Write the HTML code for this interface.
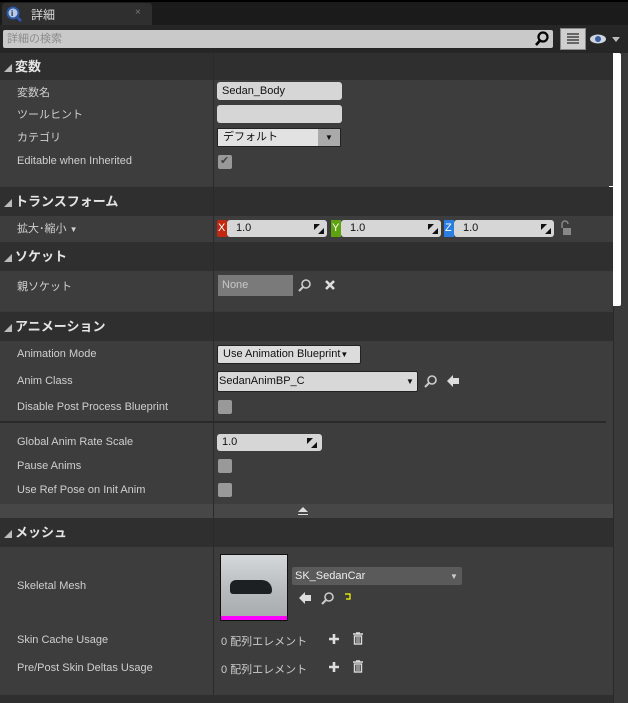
<!DOCTYPE html>
<html><head><meta charset="utf-8"><style>
*{margin:0;padding:0;box-sizing:border-box}
body{width:628px;height:703px;background:#3a3a3a;position:relative;overflow:hidden;font-family:"Liberation Sans","Noto Sans CJK JP",sans-serif;font-size:11px;color:#d0d0d0}
.a{position:absolute}
.hdr{position:absolute;left:0;width:613px;background:#2f2f2f;font-weight:bold;font-size:13px;color:#e4e4e4;padding-left:4px}
.row{position:absolute;left:0;width:613px;background:#3d3d3d}
.lbl{position:absolute;left:17px;font-size:11px;color:#cfcfcf;white-space:nowrap}
.inp{position:absolute;background:#d6d6d6;border-radius:3px;color:#111;font-size:11px;padding-left:5px}
.chk{position:absolute;width:14px;height:14px;background:#999;border-radius:2px}
.tri{font-size:8px;margin-right:3px;color:#bbb}
</style></head><body>
<div class="a" style="left:0;top:0;width:628px;height:27px;background:#1b1b1b"></div>
<div class="a" style="left:0;top:0;width:628px;height:2px;background:#000"></div>
<div class="a" style="left:2px;top:3px;width:150px;height:23px;background:#2f2f2f;border-radius:3px 3px 0 0"></div>
<svg class="a" style="left:6px;top:6px" width="17" height="17"><circle cx="7" cy="7" r="5.5" fill="#b8c9e8" stroke="#2a57a8" stroke-width="2"/><line x1="11" y1="11" x2="15" y2="15" stroke="#2a57a8" stroke-width="3"/><text x="5" y="10" font-size="8" font-weight="bold" fill="#123">i</text></svg>
<div class="a" style="left:31px;top:6px;font-size:12px;color:#ddd">詳細</div>
<div class="a" style="left:135px;top:7px;font-size:10px;color:#777">×</div>
<div class="a" style="left:0;top:25px;width:628px;height:28px;background:#262626"></div>
<div class="a" style="left:3px;top:30px;width:550px;height:18px;background:#c9c9c9;border-radius:2px;color:#8c8c8c;font-size:11px;line-height:18px;padding:0 4px">詳細の検索</div>
<svg class="a" style="left:533px;top:30px" width="18" height="18"><circle cx="10" cy="7" r="4.5" fill="none" stroke="#000" stroke-width="2.2"/><line x1="7" y1="10.5" x2="3" y2="15" stroke="#000" stroke-width="2.6"/></svg>
<div class="a" style="left:560px;top:28px;width:26px;height:22px;background:#cfcfcf;border:1px solid #888"></div>
<svg class="a" style="left:566px;top:32px" width="14" height="14"><g fill="#666"><rect x="1" y="1" width="12" height="2"/><rect x="1" y="4" width="12" height="2"/><rect x="1" y="7" width="12" height="2"/><rect x="1" y="10" width="12" height="2"/></g></svg>
<svg class="a" style="left:589px;top:32px" width="34" height="14"><ellipse cx="9" cy="7" rx="8" ry="4.5" fill="#cfd6e2"/><circle cx="9" cy="7" r="3" fill="#3a5f9e"/><path d="M23 5 L31 5 L27 10Z" fill="#bbb"/></svg>
<div class="a" style="left:609px;top:53px;width:12px;height:253px;background:#fff;border-radius:2px"></div>
<div class="a" style="left:613px;top:306px;width:1px;height:397px;background:#2a2a2a"></div>

<div class="hdr" style="top:53px;height:27px;line-height:27px"><span class="tri">◢</span>変数</div>
<div class="row" style="top:80px;height:106px"></div>
<div class="lbl" style="top:84px">変数名</div>
<div class="inp" style="left:217px;top:82px;width:125px;height:18px;line-height:18px">Sedan_Body</div>
<div class="lbl" style="top:106px">ツールヒント</div>
<div class="inp" style="left:217px;top:105px;width:125px;height:18px"></div>
<div class="lbl" style="top:129px">カテゴリ</div>
<div class="inp" style="left:217px;top:128px;width:124px;height:19px;line-height:17px;background:#e2e2e2;border:1px solid #222;border-radius:1px">デフォルト</div>
<div class="a" style="left:318px;top:129px;width:22px;height:17px;background:#aaa"></div>
<div class="a" style="left:325px;top:133px;font-size:8px;color:#111">▼</div>
<div class="lbl" style="top:155px">Editable when Inherited</div>
<div class="chk" style="left:218px;top:155px"></div>
<div class="a" style="left:220px;top:154px;font-size:11px;color:#444">✔</div>

<div class="hdr" style="top:187px;height:29px;line-height:29px"><span class="tri">◢</span>トランスフォーム</div>
<div class="row" style="top:216px;height:26px"></div>
<div class="lbl" style="top:220px">拡大･縮小 <span style="font-size:8px">▼</span></div>
<div class="a" style="left:217px;top:220px;width:10px;height:17px;background:#c1280f;border-radius:2px 0 0 2px;color:#fff;font-size:11px;padding-left:1px;line-height:17px">X</div>
<div class="inp" style="left:227px;top:220px;width:100px;height:17px;line-height:17px;padding-left:9px">1.0</div>
<div class="a" style="left:331px;top:220px;width:10px;height:17px;background:#5ea30f;color:#fff;line-height:17px;padding-left:1px">Y</div>
<div class="inp" style="left:341px;top:220px;width:100px;height:17px;line-height:17px;padding-left:9px">1.0</div>
<div class="a" style="left:444px;top:220px;width:10px;height:17px;background:#2a7de2;color:#fff;line-height:17px;padding-left:1px">Z</div>
<div class="inp" style="left:454px;top:220px;width:100px;height:17px;line-height:17px;padding-left:9px">1.0</div>
<svg class="a" style="left:314px;top:224px" width="10" height="10"><path d="M0 0H6L0 6ZM10 10H4L10 4Z" fill="#111"/></svg>
<svg class="a" style="left:428px;top:224px" width="10" height="10"><path d="M0 0H6L0 6ZM10 10H4L10 4Z" fill="#111"/></svg>
<svg class="a" style="left:541px;top:224px" width="10" height="10"><path d="M0 0H6L0 6ZM10 10H4L10 4Z" fill="#111"/></svg>
<svg class="a" style="left:560px;top:220px" width="12" height="16"><path d="M2 8V4a3 3 0 0 1 6 0" fill="none" stroke="#888" stroke-width="1.5"/><rect x="3" y="8" width="8" height="7" fill="#888"/></svg>

<div class="hdr" style="top:242px;height:29px;line-height:29px"><span class="tri">◢</span>ソケット</div>
<div class="row" style="top:271px;height:40px"></div>
<div class="lbl" style="top:278px">親ソケット</div>
<div class="a" style="left:218px;top:275px;width:75px;height:21px;background:#7a7a7a;color:#c8c8c8;line-height:21px;padding:0 4px">None</div>
<svg class="a" style="left:298px;top:278px" width="14" height="14"><circle cx="8" cy="6" r="4" fill="none" stroke="#ccc" stroke-width="1.6"/><line x1="5" y1="9" x2="1" y2="13" stroke="#ccc" stroke-width="2"/></svg>
<svg class="a" style="left:324px;top:279px" width="12" height="12"><path d="M2 2L10 10M10 2L2 10" stroke="#ddd" stroke-width="2.6"/></svg>

<div class="hdr" style="top:312px;height:29px;line-height:29px"><span class="tri">◢</span>アニメーション</div>
<div class="row" style="top:341px;height:163px"></div>
<div class="lbl" style="top:348px">Animation Mode</div>
<div class="a" style="left:217px;top:345px;width:144px;height:19px;background:#dcdcdc;border:1px solid #222;border-radius:2px;color:#111;line-height:17px;padding:0 5px;font-size:11px">Use Animation Blueprint<span style="font-size:8px">▼</span></div>
<div class="lbl" style="top:375px">Anim Class</div>
<div class="a" style="left:217px;top:371px;width:201px;height:21px;background:#d8d8d8;border:1px solid #222;border-radius:2px;color:#111;line-height:19px;padding:0 1px;font-size:11px">SedanAnimBP_C</div>
<div class="a" style="left:406px;top:377px;font-size:8px;color:#111">▼</div>
<svg class="a" style="left:424px;top:374px" width="14" height="14"><circle cx="8" cy="6" r="4" fill="none" stroke="#ccc" stroke-width="1.6"/><line x1="5" y1="9" x2="1" y2="13" stroke="#ccc" stroke-width="2"/></svg>
<svg class="a" style="left:446px;top:374px" width="14" height="14"><path d="M1 7L7 1V4H13V10H7V13Z" fill="#ddd"/></svg>
<div class="lbl" style="top:401px">Disable Post Process Blueprint</div>
<div class="chk" style="left:218px;top:400px"></div>
<div class="a" style="left:0;top:421px;width:606px;height:2px;background:#2a2a2a"></div>
<div class="lbl" style="top:436px">Global Anim Rate Scale</div>
<div class="inp" style="left:217px;top:434px;width:105px;height:17px;line-height:17px">1.0</div>
<svg class="a" style="left:307px;top:438px" width="10" height="10"><path d="M0 0H6L0 6ZM10 10H4L10 4Z" fill="#111"/></svg>
<div class="lbl" style="top:460px">Pause Anims</div>
<div class="chk" style="left:218px;top:459px"></div>
<div class="lbl" style="top:484px">Use Ref Pose on Init Anim</div>
<div class="chk" style="left:218px;top:483px"></div>
<div class="a" style="left:0;top:504px;width:613px;height:14px;background:#474747"></div>
<svg class="a" style="left:297px;top:506px" width="12" height="10"><path d="M1 6L6 1L11 6Z M1 8H11V9H1Z" fill="#ddd"/></svg>

<div class="hdr" style="top:518px;height:29px;line-height:29px"><span class="tri">◢</span>メッシュ</div>
<div class="row" style="top:547px;height:148px"></div>
<div class="a" style="left:213px;top:53px;width:1px;height:650px;background:#2a2a2a"></div>
<div class="lbl" style="top:580px">Skeletal Mesh</div>
<div class="a" style="left:220px;top:554px;width:68px;height:67px;background:#111"></div>
<div class="a" style="left:221px;top:555px;width:66px;height:61px;background:linear-gradient(#d5d8db,#b6babd 60%,#a8acaf)"></div>
<div class="a" style="left:230px;top:580px;width:42px;height:14px;background:#1d2023;border-radius:6px 10px 3px 3px"></div>
<div class="a" style="left:221px;top:616px;width:66px;height:4px;background:#ff00ff"></div>
<div class="a" style="left:292px;top:567px;width:170px;height:18px;background:#5a5a5a;border-radius:2px;color:#eee;line-height:18px;padding:0 3px;font-size:11px">SK_SedanCar</div>
<div class="a" style="left:450px;top:572px;font-size:8px;color:#ccc">▼</div>
<svg class="a" style="left:298px;top:591px" width="14" height="14"><path d="M1 7L7 1V4H13V10H7V13Z" fill="#ddd"/></svg>
<svg class="a" style="left:321px;top:591px" width="14" height="14"><circle cx="8" cy="6" r="4" fill="none" stroke="#ccc" stroke-width="1.6"/><line x1="5" y1="9" x2="1" y2="13" stroke="#ccc" stroke-width="2"/></svg>
<svg class="a" style="left:344px;top:593px" width="8" height="8"><path d="M1 1H6V6H2" fill="none" stroke="#ff0" stroke-width="1.2"/></svg>
<div class="lbl" style="top:634px">Skin Cache Usage</div>
<div class="a" style="left:221px;top:633px;color:#ccc">0 配列エレメント</div>
<div class="lbl" style="top:662px">Pre/Post Skin Deltas Usage</div>
<div class="a" style="left:221px;top:661px;color:#ccc">0 配列エレメント</div>
<svg class="a" style="left:328px;top:633px" width="12" height="12"><path d="M6 1V11M1 6H11" stroke="#ddd" stroke-width="2.6"/></svg>
<svg class="a" style="left:352px;top:632px" width="12" height="13"><path d="M1 2H11M4 1H8" stroke="#ddd" stroke-width="1.6"/><rect x="2.5" y="4" width="7" height="8" fill="none" stroke="#ddd" stroke-width="1.4"/><path d="M5 5V11M7 5V11" stroke="#ddd"/></svg>
<svg class="a" style="left:328px;top:661px" width="12" height="12"><path d="M6 1V11M1 6H11" stroke="#ddd" stroke-width="2.6"/></svg>
<svg class="a" style="left:352px;top:660px" width="12" height="13"><path d="M1 2H11M4 1H8" stroke="#ddd" stroke-width="1.6"/><rect x="2.5" y="4" width="7" height="8" fill="none" stroke="#ddd" stroke-width="1.4"/><path d="M5 5V11M7 5V11" stroke="#ddd"/></svg>
<div class="a" style="left:0;top:695px;width:613px;height:8px;background:#2f2f2f"></div>
</body></html>
